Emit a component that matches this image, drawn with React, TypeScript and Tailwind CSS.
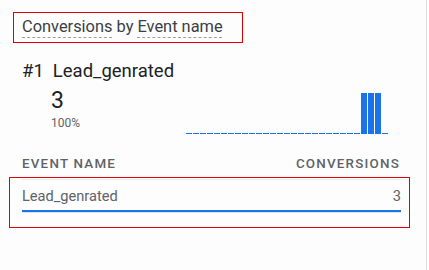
const bars = Array.from({ length: 29 }, (_, i) => (i >= 25 && i <= 27 ? 41 : 1));

export default function App() {
  return (
    <div className="h-[270px] w-[429px] bg-white font-['Roboto',sans-serif]">
      <div className="h-[270px] w-[427px] border-r border-[#dadce0] bg-[#fdfdfd] pt-[12px]">
        {/* Title, outlined in red */}
        <div className="ml-[13px] flex h-[31px] w-[230px] items-center border border-solid border-[#e00000] pl-[8px] pb-[2px]">
          <h2 className="text-[16.4px] leading-[20px] text-[#3c4043]">
            <span className="underline decoration-[#9aa0a6] decoration-dashed decoration-1 underline-offset-[5px]">
              Conversions
            </span>{" "}
            by{" "}
            <span className="underline decoration-[#9aa0a6] decoration-dashed decoration-1 underline-offset-[5px]">
              Event name
            </span>
          </h2>
        </div>

        {/* Top item */}
        <div className="mt-[16px] pl-[22px] pr-[28px]">
          <div className="flex items-baseline gap-[9px] text-[18.5px] leading-[24px] text-[#202124]">
            <span>#1</span>
            <span>Lead_genrated</span>
          </div>
          <div className="flex h-[47px] items-start">
            <div className="pl-[29px] pt-[4px]">
              <div className="text-[23px] leading-[28px] text-[#202124]">3</div>
              <div className="mt-[1px] text-[12px] leading-[14px] text-[#5f6368]">100%</div>
            </div>
            <div className="ml-[106px] mt-[9px] flex h-[42px] shrink-0 items-end gap-px">
              {bars.map((h, i) => (
                <div key={i} className="w-[6px] bg-[#1a73e8]" style={{ height: h }} />
              ))}
            </div>
          </div>
        </div>

        {/* Table */}
        <div className="mt-[26px] flex h-[16px] justify-between pl-[22px] pr-[27px] text-[13.4px] font-medium leading-[16px] tracking-[0.09em] text-[#5f6368]">
          <span>EVENT NAME</span>
          <span className="-mr-[1px]">CONVERSIONS</span>
        </div>
        <div className="ml-[9px] mt-[5px] h-[51px] w-[401px] border border-solid border-[#e00000] pl-[12px] pr-[8px] pt-[1px]">
          <div className="border-t border-[#e8eaed] pt-[7px]">
            <div className="flex h-[18px] justify-between text-[14.6px] leading-[18px] text-[#5f6368]">
              <span>Lead_genrated</span>
              <span>3</span>
            </div>
            <div className="mt-[5px] h-[3px] bg-[#d2e3fc]">
              <div className="mt-[1px] h-[2px] w-full bg-[#1a73e8]" />
            </div>
          </div>
        </div>
      </div>
    </div>
  );
}
